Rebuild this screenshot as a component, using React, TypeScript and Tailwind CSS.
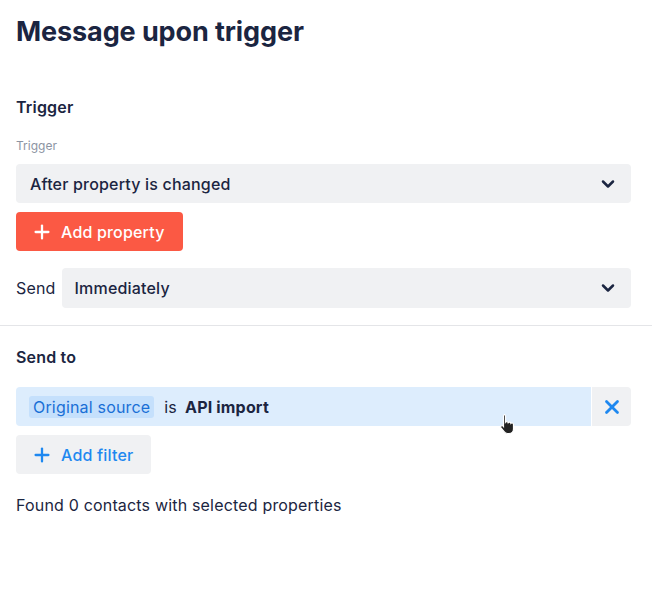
import { ChevronDown, Plus, X } from 'lucide-react';

export default function App() {
  return (
    <div className="relative w-[652px] h-[616px] bg-white text-[#1b2541] tracking-[0.18px]" style={{ fontFamily: 'Inter, "Noto Sans", sans-serif' }}>
      <div className="pl-4 pr-[21px] pt-[14px]">
        <h1 className="text-[27px] font-bold leading-9 tracking-[-0.1px]">Message upon trigger</h1>

        {/* Trigger */}
        <h2 className="mt-[45px] text-base font-semibold leading-6">Trigger</h2>
        <div className="mt-[19px] text-xs leading-4 text-[#8c94a3] tracking-normal">Trigger</div>
        <button className="mt-[10px] flex h-[39px] w-full items-center justify-between rounded bg-[#f0f1f3] pl-[14px] pr-[13px] text-base font-medium">
          <span>After property is changed</span>
          <ChevronDown size={20} strokeWidth={3} />
        </button>
        <button className="mt-[9px] flex h-[39px] items-center gap-2 rounded bg-[#fb5944] pl-[15px] pr-[18px] text-base font-medium text-white">
          <Plus size={22} strokeWidth={2.5} />
          <span>Add property</span>
        </button>

        <div className="mt-[17px] flex items-center gap-[6px]">
          <span className="text-base">Send</span>
          <button className="flex h-10 flex-1 items-center justify-between rounded bg-[#f0f1f3] pl-[13px] pr-[13px] text-base font-medium">
            <span>Immediately</span>
            <ChevronDown size={20} strokeWidth={3} />
          </button>
        </div>
      </div>

      <div className="mt-[17px] h-px bg-[#e4e5e8]" />

      {/* Send to */}
      <div className="pl-4 pr-[21px]">
        <h2 className="mt-[19px] text-base font-semibold leading-6">Send to</h2>
        <div className="mt-[18px] flex h-[39px] overflow-hidden rounded">
          <div className="flex flex-1 items-center gap-[10px] bg-[#ddedfd] pl-[13px] text-base">
            <span className="rounded-[3px] bg-[#c5e0fc] px-[4px] leading-[22px] text-[#1a6fd6]">Original source</span>
            <span>is</span>
            <span className="-ml-[2px] font-bold">API import</span>
          </div>
          <button className="ml-px flex w-[39px] items-center justify-center bg-[#f0f1f3] text-[#1e88f0]">
            <X size={22} strokeWidth={3} />
          </button>
        </div>
        <button className="mt-[9px] flex h-[39px] items-center gap-2 rounded bg-[#f0f1f3] pl-[15px] pr-[18px] text-base font-medium text-[#1e88f0]">
          <Plus size={22} strokeWidth={2.5} />
          <span>Add filter</span>
        </button>
        <p className="mt-[19px] text-base leading-6">Found 0 contacts with selected properties</p>
      </div>

      {/* mouse cursor */}
      <svg className="absolute left-[499px] top-[413px]" width="18" height="22" viewBox="0 0 18 22">
        <path
          d="M5 1.5c.9 0 1.5.6 1.5 1.5v6.2c.3-.4.8-.6 1.3-.6.8 0 1.3.5 1.4 1.1.3-.4.8-.6 1.3-.6.8 0 1.4.6 1.4 1.3.3-.3.7-.4 1.1-.4.9 0 1.5.7 1.5 1.5v4.5c0 2.6-2 4.5-4.5 4.5H8.5c-1.5 0-2.6-.7-3.4-1.8L2 14.8c-.5-.7-.3-1.6.4-2 .6-.4 1.4-.2 1.8.3l.3.4V3c0-.9.6-1.5 1.5-1.5z"
          fill="#222"
          stroke="#fff"
          strokeWidth="1.2"
        />
      </svg>
    </div>
  );
}
